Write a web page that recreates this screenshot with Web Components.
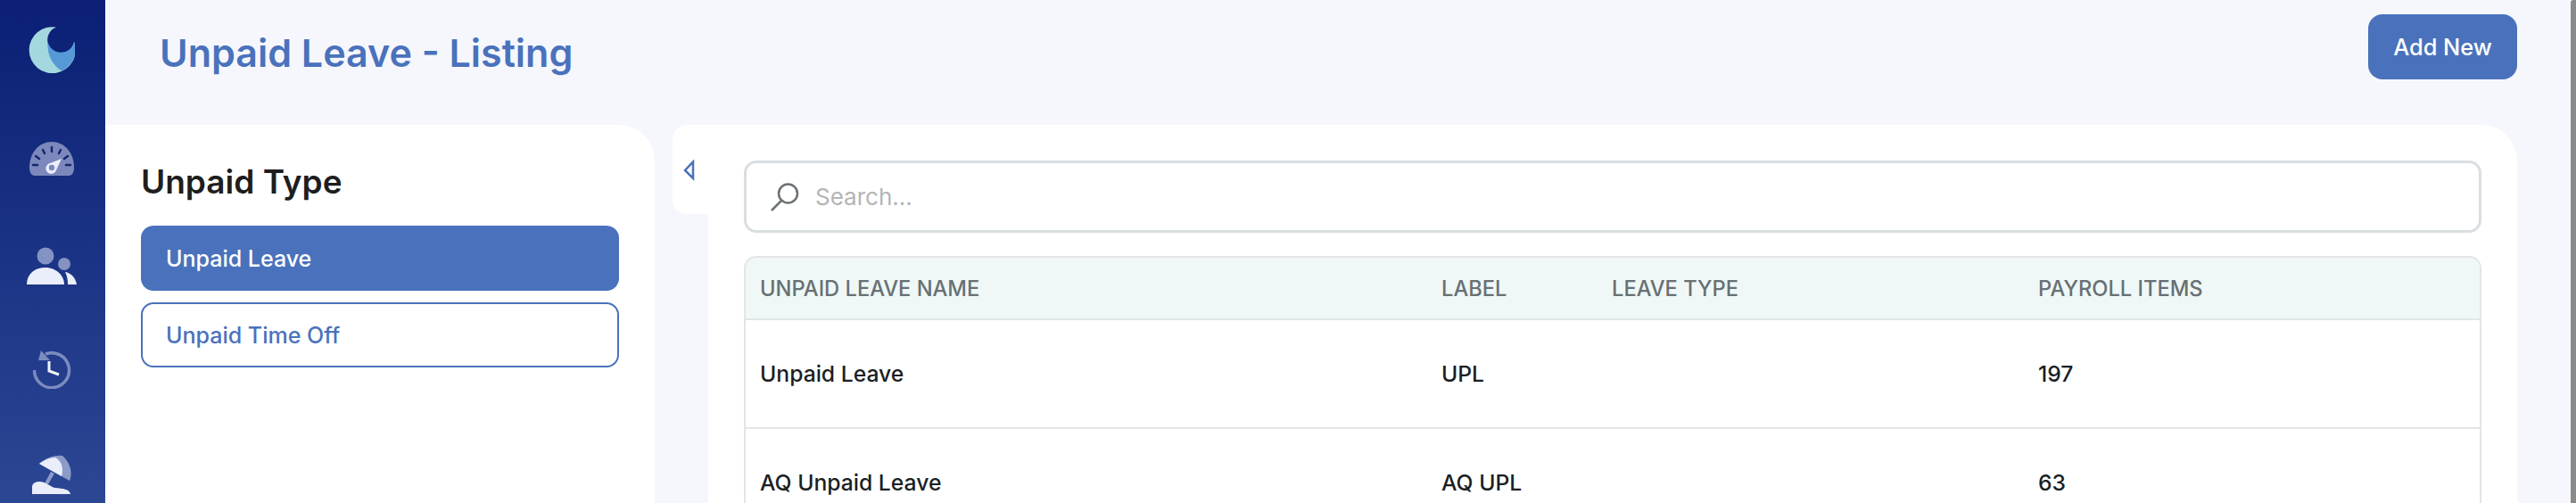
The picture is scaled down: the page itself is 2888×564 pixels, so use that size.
<!DOCTYPE html>
<html><head><meta charset="utf-8"><style>
html,body{margin:0;padding:0;height:100%;overflow:hidden;background:#f5f7fc}
body{font-family:Inter,Lato,sans-serif}
app-shell{display:flex;width:2888px;height:564px}
</style></head><body>
<template id="t-shell"><style>
:host{display:flex;width:2888px;height:564px;overflow:hidden;background:#f5f7fc}
.main{flex:1;display:flex;flex-direction:column;min-width:0}
.content{flex:1;display:flex;min-height:0}
.bar{width:6px;background:#8a8a8a;border-radius:3px 0 0 0}
</style><slot name="side"></slot><div class="main"><slot name="head"></slot><div class="content"><slot name="left"></slot><slot name="right"></slot></div></div><div class="bar"></div></template>

<template id="t-side"><style>
:host{display:flex;flex-direction:column;align-items:center;width:118px;height:564px;flex:none;box-sizing:border-box;padding-right:2px;background:linear-gradient(180deg,#0a1f75 0%,#2c4794 100%)}
svg{display:block;flex:none}
</style>
<svg style="margin-top:30px" width="52" height="52" viewBox="0 0 52 52"><path fill="#a3d8df" d="M31 .5A26 26 0 1 0 51 17A15 15 0 1 1 31 .5Z"/><path fill="#5599d6" d="M21.500 16A15 15 0 0 0 51 17A26 26 0 0 1 37 49.500Q20 38 21.500 16Z"/></svg>
<svg style="margin-top:76px" width="52" height="40" viewBox="0 0 52 40"><path fill="#7c88bb" d="M1 30C1 13 12 1 26 1S51 13 51 30C51 35 49 39 45 39H7C3 39 1 35 1 30Z"/><g stroke="#14286f" stroke-width="2.500" stroke-linecap="round"><path d="M5 27H10M42 27H47M8 17L12 20M44 17L40 20M16 10L18 14M36 10L34 14M26 7V12"/></g><path fill="#e9eefa" d="M37 20L31 33A6 6 0 1 1 24 25Z"/><circle cx="26" cy="30" r="3.200" fill="#7c88bb"/></svg>
<svg style="margin-top:79px" width="56" height="42" viewBox="0 0 56 42"><circle cx="21" cy="10" r="9.500" fill="#8492c4"/><circle cx="42" cy="19" r="7" fill="#8492c4"/><path fill="#e9eefa" d="M0 42C0 30 9 23 21 23C33 23 42 32 42 42Z"/><path fill="#e9eefa" d="M43 28C50 29 55 35 56 42H46C46 36 45 32 43 28Z"/></svg>
<svg style="margin-top:74px" width="43" height="43" viewBox="0 0 43 43"><path fill="none" stroke="#7c8bbf" stroke-width="3.500" d="M14 4A19.500 19.500 0 1 1 1.500 22"/><path fill="#7c8bbf" d="M9 0L6 11H19Z"/><path fill="none" stroke="#f0f3fb" stroke-width="3" d="M18 12V23L29 27"/></svg>
<svg style="margin-top:74px" width="44" height="44" viewBox="0 0 44 44"><path fill="#8c9bc8" d="M8 10C16 3 26 0 34 1C42 8 46 19 42 29L33 24Z"/><path fill="#e9eefa" d="M8 10C13 6 20 3 26 3C32 6 36 14 33 24Z"/><path fill="#8c9bc8" d="M21 19L25 21L18 33L14 32Z"/><path fill="#e9eefa" d="M0 44V36C0 32 4 30 8 30C16 30 20 36 26 37C34 38 42 38 43 44Z"/></svg>
</template>

<template id="t-head"><style>
:host{display:flex;height:140px;flex:none;box-sizing:border-box;padding:0 60px 0 61px;justify-content:space-between;align-items:flex-start}
h1{margin:33px 0 0;font:600 43px/52px var(--f);color:#4a72bc;white-space:nowrap}
</style><h1><slot></slot></h1><slot name="action"></slot></template>

<template id="t-btn"><style>
:host{display:block;margin-top:16px;width:167px;height:73px;box-sizing:border-box;background:#4a72bc;border-radius:16px;color:#fff;font:500 25.400px/73px var(--f);text-align:center;white-space:nowrap}
</style><slot></slot></template>

<template id="t-left"><style>
:host{display:block;flex:none;width:616px;background:#fff;border-radius:0 40px 0 0;box-sizing:border-box;padding:36px 40px 0 40px}
h2{margin:0 0 21px;font:600 37px/56px var(--f);color:#1e1e1e}
.list{display:flex;flex-direction:column;gap:13px}
</style><h2><slot name="title"></slot></h2><div class="list"><slot></slot></div></template>

<template id="t-item"><style>
:host{display:block;height:73px;box-sizing:border-box;border-radius:14px;border:2px solid #4a72bc;color:#4a72bc;background:#fff;font:500 25px/70px var(--f);padding-left:26px;white-space:nowrap}
:host([active]){background:#4a72bc;color:#fff}
</style><slot></slot></template>

<template id="t-right"><style>
:host{display:flex;flex:1;min-width:0;margin-left:20px;margin-right:60px}
.tab{flex:none;width:40px;height:100px;background:#fff;border-radius:16px 0 0 16px;box-sizing:border-box;padding:39px 0 0 12px}
.tab svg{display:block}
.card{flex:1;min-width:0;background:#fff;border-radius:0 40px 0 0;box-sizing:border-box;padding:40px 40px 0}
</style><div class="tab"><svg width="14" height="24" viewBox="0 0 14 24"><path fill="none" stroke="#4a72bc" stroke-width="2.500" d="M11 2.500V21L2 12Z"/></svg></div><div class="card"><slot></slot></div></template>

<template id="t-search"><style>
:host{display:flex;align-items:center;height:81px;box-sizing:border-box;border:3px solid #d9dfe1;border-radius:14px;background:#fff;padding-left:26px;color:#b3b5b7;font:400 26px/1 var(--f);margin-bottom:26px}
svg{margin-right:17px;flex:none}
</style><svg width="34" height="34" viewBox="0 0 34 34"><circle cx="20.500" cy="13" r="10.500" fill="none" stroke="#6b7174" stroke-width="2.500"/><path d="M13 21L2 32" stroke="#6b7174" stroke-width="2.500"/></svg><slot></slot></template>

<template id="t-table"><style>
:host{display:block;box-sizing:border-box;border:2px solid #e3e5e6;border-bottom:0;border-radius:14px 14px 0 0;overflow:hidden}
</style><slot></slot></template>

<template id="t-row"><style>
:host{display:grid;grid-template-columns:764px 191px 478px 1fr;height:122px;align-items:center;box-sizing:border-box;border-top:2px solid #e3e5e6;font:500 24.700px/1 var(--f);color:#1b1f24;padding-left:16px;white-space:nowrap}
:host([head]){height:68px;border-top:0;background:#eff8f6;color:#687074;font-weight:500;font-size:23.700px;padding-top:2px}
</style><slot></slot></template>

<app-shell>
<app-side slot="side"></app-side>
<app-head slot="head">Unpaid Leave - Listing<app-btn slot="action">Add New</app-btn></app-head>
<app-left slot="left"><span slot="title">Unpaid Type</span><app-item active>Unpaid Leave</app-item><app-item>Unpaid Time Off</app-item></app-left>
<app-right slot="right">
<app-search>Search...</app-search>
<app-table>
<app-row head><span>UNPAID LEAVE NAME</span><span>LABEL</span><span>LEAVE TYPE</span><span>PAYROLL ITEMS</span></app-row>
<app-row><span>Unpaid Leave</span><span>UPL</span><span></span><span>197</span></app-row>
<app-row><span>AQ Unpaid Leave</span><span>AQ UPL</span><span></span><span>63</span></app-row>
</app-table>
</app-right>
</app-shell>
<script>
document.documentElement.style.setProperty('--f','Inter,Lato,sans-serif');
[['app-shell','t-shell'],['app-side','t-side'],['app-head','t-head'],['app-btn','t-btn'],['app-left','t-left'],['app-item','t-item'],['app-right','t-right'],['app-search','t-search'],['app-table','t-table'],['app-row','t-row']].forEach(function(p){
customElements.define(p[0],class extends HTMLElement{constructor(){super();this.attachShadow({mode:'open'}).appendChild(document.getElementById(p[1]).content.cloneNode(true));}});
});
</script>
</body></html>
